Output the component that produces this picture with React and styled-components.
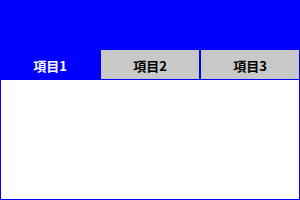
import styled, { createGlobalStyle } from "styled-components";

const GlobalStyle = createGlobalStyle`
  html, body {
    margin: 0;
    padding: 0;
    background: #0000ff;
  }
  #root {
    width: 300px;
    height: 200px;
  }
`;

const StyledPage = styled.div`
  display: flex;
  flex-direction: column;
  width: 300px;
  height: 200px;
  padding-top: 50px;
  box-sizing: border-box;
  background: #0000ff;
`;

const StyledTabs = styled.div`
  display: grid;
  grid-template-columns: 100px 100px 100px;
  height: 30px;
`;

const StyledTab = styled.div`
  display: flex;
  align-items: center;
  justify-content: center;
  padding-top: 1px;
  margin: ${(p) => (p.$active ? "0" : "0 1px 1px 1px")};
  background: ${(p) => (p.$active ? "#0000ff" : "#c8c8c8")};
  color: ${(p) => (p.$active ? "#ffffff" : "#000000")};
  font-family: "Noto Sans CJK JP", "Liberation Sans", sans-serif;
  font-weight: bold;
  font-size: 13px;
  line-height: 1;
`;

const StyledPanel = styled.div`
  flex: 1;
  background: #ffffff;
  border: 1px solid #0000ff;
  border-top: none;
`;

const tabs = ["項目1", "項目2", "項目3"];

function App() {
  return (
    <>
      <GlobalStyle />
      <StyledPage>
        <StyledTabs>
          {tabs.map((t, i) => (
            <StyledTab key={t} $active={i === 0}>
              {t}
            </StyledTab>
          ))}
        </StyledTabs>
        <StyledPanel />
      </StyledPage>
    </>
  );
}

export default App;
